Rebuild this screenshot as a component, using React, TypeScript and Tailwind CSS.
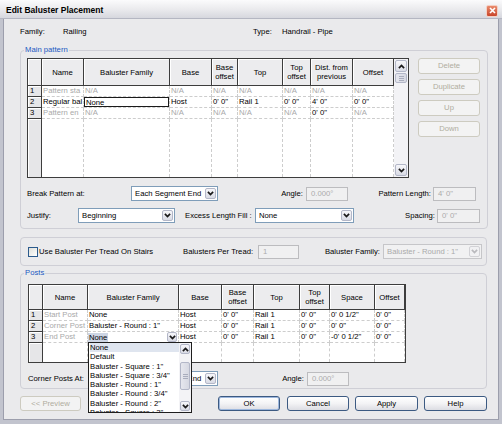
import React from 'react';

type Cell = { t?: string; g?: boolean; edit?: boolean; combo?: boolean };

const GRAY = 'text-[#a9a9a9]';

function Chevron({ up = false, color = '#1a1a1a' }: { up?: boolean; color?: string }) {
  return (
    <svg width="7" height="5" viewBox="0 0 7 5" className={up ? 'rotate-180' : ''}>
      <path d="M0.9 0.9 L3.5 3.6 L6.1 0.9" fill="none" stroke={color} strokeWidth="1.7" />
    </svg>
  );
}

function ArrowBtn({ up, disabled, className = '' }: { up?: boolean; disabled?: boolean; className?: string }) {
  return (
    <div
      className={`flex shrink-0 items-center justify-center rounded-[2px] border ${
        disabled ? 'border-[#d2d2d6] bg-[#f1f1f3]' : 'border-[#b3b7c8] bg-linear-to-b from-[#f7f7fa] to-[#d9dbe5]'
      } ${className}`}
    >
      <Chevron up={up} color={disabled ? '#b9b9bd' : '#1a1a1a'} />
    </div>
  );
}

function Combo({ value, className, disabled }: { value: string; className: string; disabled?: boolean }) {
  return (
    <div
      className={`flex h-[15px] items-center border pl-[3px] pr-[1px] ${
        disabled ? 'border-[#c6c6c9] bg-[#f1f1f2] text-[#aaaaaa]' : 'border-[#7f9db9] bg-white'
      } ${className}`}
    >
      <span className="flex-1 overflow-hidden whitespace-nowrap">{value}</span>
      <ArrowBtn disabled={disabled} className="h-[11px] w-[11px]" />
    </div>
  );
}

function Field({ value, className }: { value: string; className: string }) {
  return (
    <div className={`flex h-[14px] items-center border border-[#bcbcbf] bg-[#f0f0f1] pl-[4px] text-[#ababab] ${className}`}>
      {value}
    </div>
  );
}

function Btn({ children, disabled, className }: { children: React.ReactNode; disabled?: boolean; className: string }) {
  return (
    <button
      type="button"
      className={`flex h-[15px] items-center justify-center rounded-[3px] border ${
        disabled
          ? 'border-[#cdcbc0] bg-[#f3f3f3] text-[#b0ad9e]'
          : 'border-[#3c5a82] bg-linear-to-b from-white via-[#f3f3f5] to-[#dcdde3] text-black'
      } ${className}`}
    >
      {children}
    </button>
  );
}

function Group({ label, className = '', children }: { label?: string; className?: string; children: React.ReactNode }) {
  return (
    <fieldset className={`rounded-[4px] border border-[#cfcfd6] ${className}`}>
      {label && <legend className="ml-[3px] px-[1px] leading-[10px] text-[#2158c2]">{label}</legend>}
      {children}
    </fieldset>
  );
}

function HeadCell({ lines }: { lines: string[] }) {
  return (
    <div className="flex flex-col items-center justify-center border-b border-r border-[#3d3d3d] bg-[#ececee] leading-[9px] shadow-[inset_1px_1px_0_#ffffff]">
      {lines.map((l) => (
        <span key={l}>{l}</span>
      ))}
    </div>
  );
}

function RowHead({ n }: { n?: string }) {
  return (
    <div className="border-b border-r border-[#3d3d3d] bg-[#e6e6e8] pl-[2px] leading-[10px] shadow-[inset_1px_1px_0_#ffffff]">
      {n}
    </div>
  );
}

function DataCell({ c }: { c: Cell }) {
  if (c.edit) {
    return (
      <div className="border-b border-r border-dashed border-[#cdcdcd] bg-white">
        <div className="h-full border border-[#1b1b1b] pl-[1px] leading-[9px]">{c.t}</div>
      </div>
    );
  }
  if (c.combo) {
    return (
      <div className="flex items-center border-b border-r border-dashed border-[#cdcdcd] bg-white pr-[1px]">
        <span className="bg-[#cdd5e4] px-[1px] leading-[9px]">{c.t}</span>
        <div className="flex-1" />
        <ArrowBtn className="h-[10px] w-[10px]" />
      </div>
    );
  }
  return (
    <div
      className={`overflow-hidden whitespace-nowrap border-b border-r border-dashed border-[#cdcdcd] bg-white pl-[1px] leading-[10px] ${
        c.g ? GRAY : ''
      }`}
    >
      {c.t}
    </div>
  );
}

function Table({
  cols,
  rows,
  heads,
  data,
}: {
  cols: string;
  rows: string;
  heads: string[][];
  data: Cell[][];
}) {
  return (
    <div className={`grid ${cols} ${rows}`}>
      <HeadCell lines={[]} />
      {heads.map((h) => (
        <HeadCell key={h.join(' ')} lines={h} />
      ))}
      {data.map((r, i) => (
        <React.Fragment key={i}>
          <RowHead n={String(i + 1)} />
          {r.map((c, j) => (
            <DataCell key={j} c={c} />
          ))}
        </React.Fragment>
      ))}
      <div className="border-r border-[#3d3d3d] bg-[#e6e6e8] shadow-[inset_1px_1px_0_#ffffff]" />
      {heads.map((h) => (
        <div key={h.join(' ')} className="border-r border-dashed border-[#cdcdcd] bg-white" />
      ))}
    </div>
  );
}

const NA: Cell = { t: 'N/A', g: true };

const mainData: Cell[][] = [
  [{ t: 'Pattern sta', g: true }, NA, NA, NA, NA, NA, NA, NA],
  [{ t: 'Regular bal' }, { t: 'None', edit: true }, { t: 'Host' }, { t: `0'  0"` }, { t: 'Rail 1' }, { t: `0'  0"` }, { t: `4'  0"` }, { t: `0'  0"` }],
  [{ t: 'Pattern en', g: true }, NA, NA, NA, NA, NA, { t: `0'  0"` }, NA],
];

const postData: Cell[][] = [
  [{ t: 'Start Post', g: true }, { t: 'None' }, { t: 'Host' }, { t: `0'  0"` }, { t: 'Rail 1' }, { t: `0'  0"` }, { t: `0'  0 1/2"` }, { t: `0'  0"` }],
  [{ t: 'Corner Post', g: true }, { t: 'Baluster - Round : 1"' }, { t: 'Host' }, { t: `0'  0"` }, { t: 'Rail 1' }, { t: `0'  0"` }, { t: `0'  0"` }, { t: `0'  0"` }],
  [{ t: 'End Post', g: true }, { t: 'None', combo: true }, { t: 'Host' }, { t: `0'  0"` }, { t: 'Rail 1' }, { t: `0'  0"` }, { t: `-0'  0 1/2"` }, { t: `0'  0"` }],
];

const listItems = [
  'None',
  'Default',
  'Baluster - Square : 1"',
  'Baluster - Square : 3/4"',
  'Baluster - Round : 1"',
  'Baluster - Round : 3/4"',
  'Baluster - Round : 2"',
  'Baluster - Square : 2"',
];

function Grip() {
  return (
    <div className="flex flex-col items-center gap-[1px]">
      <div className="h-px w-[5px] bg-[#a9adbd]" />
      <div className="h-px w-[5px] bg-[#a9adbd]" />
      <div className="h-px w-[5px] bg-[#a9adbd]" />
    </div>
  );
}

export default function App() {
  return (
    <div className="h-[424px] w-[502px] overflow-hidden bg-[#c2c4ce] font-['Liberation_Sans',Arial,sans-serif] text-[7.7px] leading-[10px] text-black">
      {/* Title bar */}
      <div className="flex h-[19px] items-center justify-between border-b border-[#b4b6c2] bg-linear-to-b from-[#fbfbfc] via-[#ebebee] to-[#d6d7de] pl-[6px] pr-[4px]">
        <span className="pt-[1px] text-[8.5px] font-bold">Edit Baluster Placement</span>
        <div className="mt-[3px] flex h-[12px] w-[12px] items-center justify-center rounded-[2px] border border-[#f4d0c4] bg-linear-to-b from-[#e98a6c] to-[#c8442a]">
          <svg width="7" height="7" viewBox="0 0 7 7">
            <path d="M1 1 L6 6 M6 1 L1 6" stroke="white" strokeWidth="1.6" />
          </svg>
        </div>
      </div>

      <div className="mx-[3px] flex h-[401px] flex-col border-x border-b border-[#9c9eac] bg-[#eaeaec] pl-[16px] pr-[11px]">
        {/* Family / Type */}
        <div className="mt-[6px] flex h-[14px] items-center">
          <span className="w-[43px]">Family:</span>
          <span className="w-[190px]">Railing</span>
          <span className="w-[29px]">Type:</span>
          <span>Handrail - Pipe</span>
        </div>

        {/* Main pattern */}
        <Group label="Main pattern" className="mt-[6px]">
          <div className="pl-[6px] pr-[7px] pb-[5px] pt-[3px]">
            <div className="flex items-start justify-between">
              <div className="flex h-[120px] w-[382px] border border-[#3d3d3d]">
                <Table
                  cols="grid-cols-[14px_42px_86px_42px_26px_45px_28px_42px_41px]"
                  rows="grid-rows-[27px_11px_11px_11px_58px]"
                  heads={[['Name'], ['Baluster Family'], ['Base'], ['Base', 'offset'], ['Top'], ['Top', 'offset'], ['Dist. from', 'previous'], ['Offset']]}
                  data={mainData}
                />
                <div className="flex w-[14px] flex-col bg-[#f3f3f6] p-[1px]">
                  <ArrowBtn up className="h-[12px]" />
                  <div className="mt-[1px] flex h-[10px] items-center justify-center rounded-[2px] border border-[#b3b7c8] bg-linear-to-r from-[#e6e7ee] to-[#d6d8e2]">
                    <Grip />
                  </div>
                  <div className="flex-1" />
                  <ArrowBtn className="h-[12px]" />
                </div>
              </div>
              <div className="flex w-[62px] flex-col gap-[5px]">
                <Btn disabled className="h-[16px] w-[62px]">Delete</Btn>
                <Btn disabled className="h-[16px] w-[62px]">Duplicate</Btn>
                <Btn disabled className="h-[16px] w-[62px]">Up</Btn>
                <Btn disabled className="h-[16px] w-[62px]">Down</Btn>
              </div>
            </div>

            <div className="mt-[8px] flex items-center">
              <span className="w-[104px]">Break Pattern at:</span>
              <Combo value="Each Segment End" className="w-[87px]" />
              <span className="w-[88px] pr-[3px] text-right">Angle:</span>
              <Field value="0.000°" className="w-[42px]" />
              <span className="w-[85px] pr-[2px] text-right">Pattern Length:</span>
              <Field value={`4'  0"`} className="w-[43px]" />
            </div>

            <div className="mt-[7px] flex items-center">
              <span className="w-[51px]">Justify:</span>
              <Combo value="Beginning" className="w-[97px]" />
              <span className="w-[80px] pl-[10px]">Excess Length Fill :</span>
              <Combo value="None" className="w-[99px]" />
              <span className="w-[83px] pr-[2px] text-right">Spacing:</span>
              <Field value={`0'  0"`} className="w-[43px]" />
            </div>
          </div>
        </Group>

        {/* Baluster per tread */}
        <Group className="mt-[8px]">
          <div className="flex h-[27px] items-center pl-[7px]">
            <div className="flex w-[155px] items-center">
              <div className="h-[10px] w-[10px] border border-[#2b5a8c] bg-linear-to-br from-[#dedfd9] to-white" />
              <span className="ml-[1px]">Use Baluster Per Tread On Stairs</span>
            </div>
            <span className="w-[75px]">Balusters Per Tread:</span>
            <Field value="1" className="w-[41px]" />
            <span className="w-[84px] pr-[3px] text-right">Baluster Family:</span>
            <Combo value={`Baluster - Round : 1"`} className="w-[99px]" disabled />
          </div>
        </Group>

        {/* Posts */}
        <Group label="Posts" className="mt-[2px]">
          <div className="pl-[7px] pb-[2px] pt-[6px]">
            <div className="relative w-[378px] border border-[#3d3d3d]">
              <Table
                cols="grid-cols-[14px_45px_91px_43px_32px_46px_30px_45px_30px]"
                rows="grid-rows-[25px_11px_11px_11px_19px]"
                heads={[['Name'], ['Baluster Family'], ['Base'], ['Base', 'offset'], ['Top'], ['Top', 'offset'], ['Space'], ['Offset']]}
                data={postData}
              />
              {/* open drop-down list */}
              <div className="absolute left-[59px] top-[57px] z-10 flex h-[71px] w-[104px] border border-[#1e1e1e] bg-white">
                <div className="flex-1 overflow-hidden whitespace-nowrap pl-[1px] leading-[9.3px]">
                  {listItems.map((it, i) => (
                    <div key={it} className={i === 0 ? 'bg-[#dfe5ef]' : ''}>
                      {it}
                    </div>
                  ))}
                </div>
                <div className="flex w-[12px] flex-col bg-[#f3f3f6] p-[1px]">
                  <ArrowBtn up className="h-[10px]" />
                  <div className="mt-[8px] flex h-[28px] items-center justify-center rounded-[2px] border border-[#b3b7c8] bg-linear-to-r from-[#e6e7ee] to-[#d6d8e2]">
                    <Grip />
                  </div>
                  <div className="flex-1" />
                  <ArrowBtn className="h-[10px]" />
                </div>
              </div>
            </div>

            <div className="mt-[8px] flex items-center">
              <span className="w-[103px]">Corner Posts At:</span>
              <Combo value="Each Segment End" className="w-[87px]" />
              <span className="w-[89px] pr-[3px] text-right">Angle:</span>
              <Field value="0.000°" className="w-[42px]" />
            </div>
          </div>
        </Group>

        {/* Bottom buttons */}
        <div className="mt-[7px] flex items-center">
          <Btn disabled className="w-[61px]">
            &lt;&lt; Preview
          </Btn>
          <div className="ml-auto flex gap-[6px]">
            <Btn className="mr-[1px] w-[62px] border-[#2c4f7e] shadow-[inset_0_0_0_1px_#9db7dd]">OK</Btn>
            <Btn className="w-[62px]">Cancel</Btn>
            <Btn className="w-[63px]">Apply</Btn>
            <Btn className="w-[63px]">Help</Btn>
          </div>
        </div>
      </div>
    </div>
  );
}
